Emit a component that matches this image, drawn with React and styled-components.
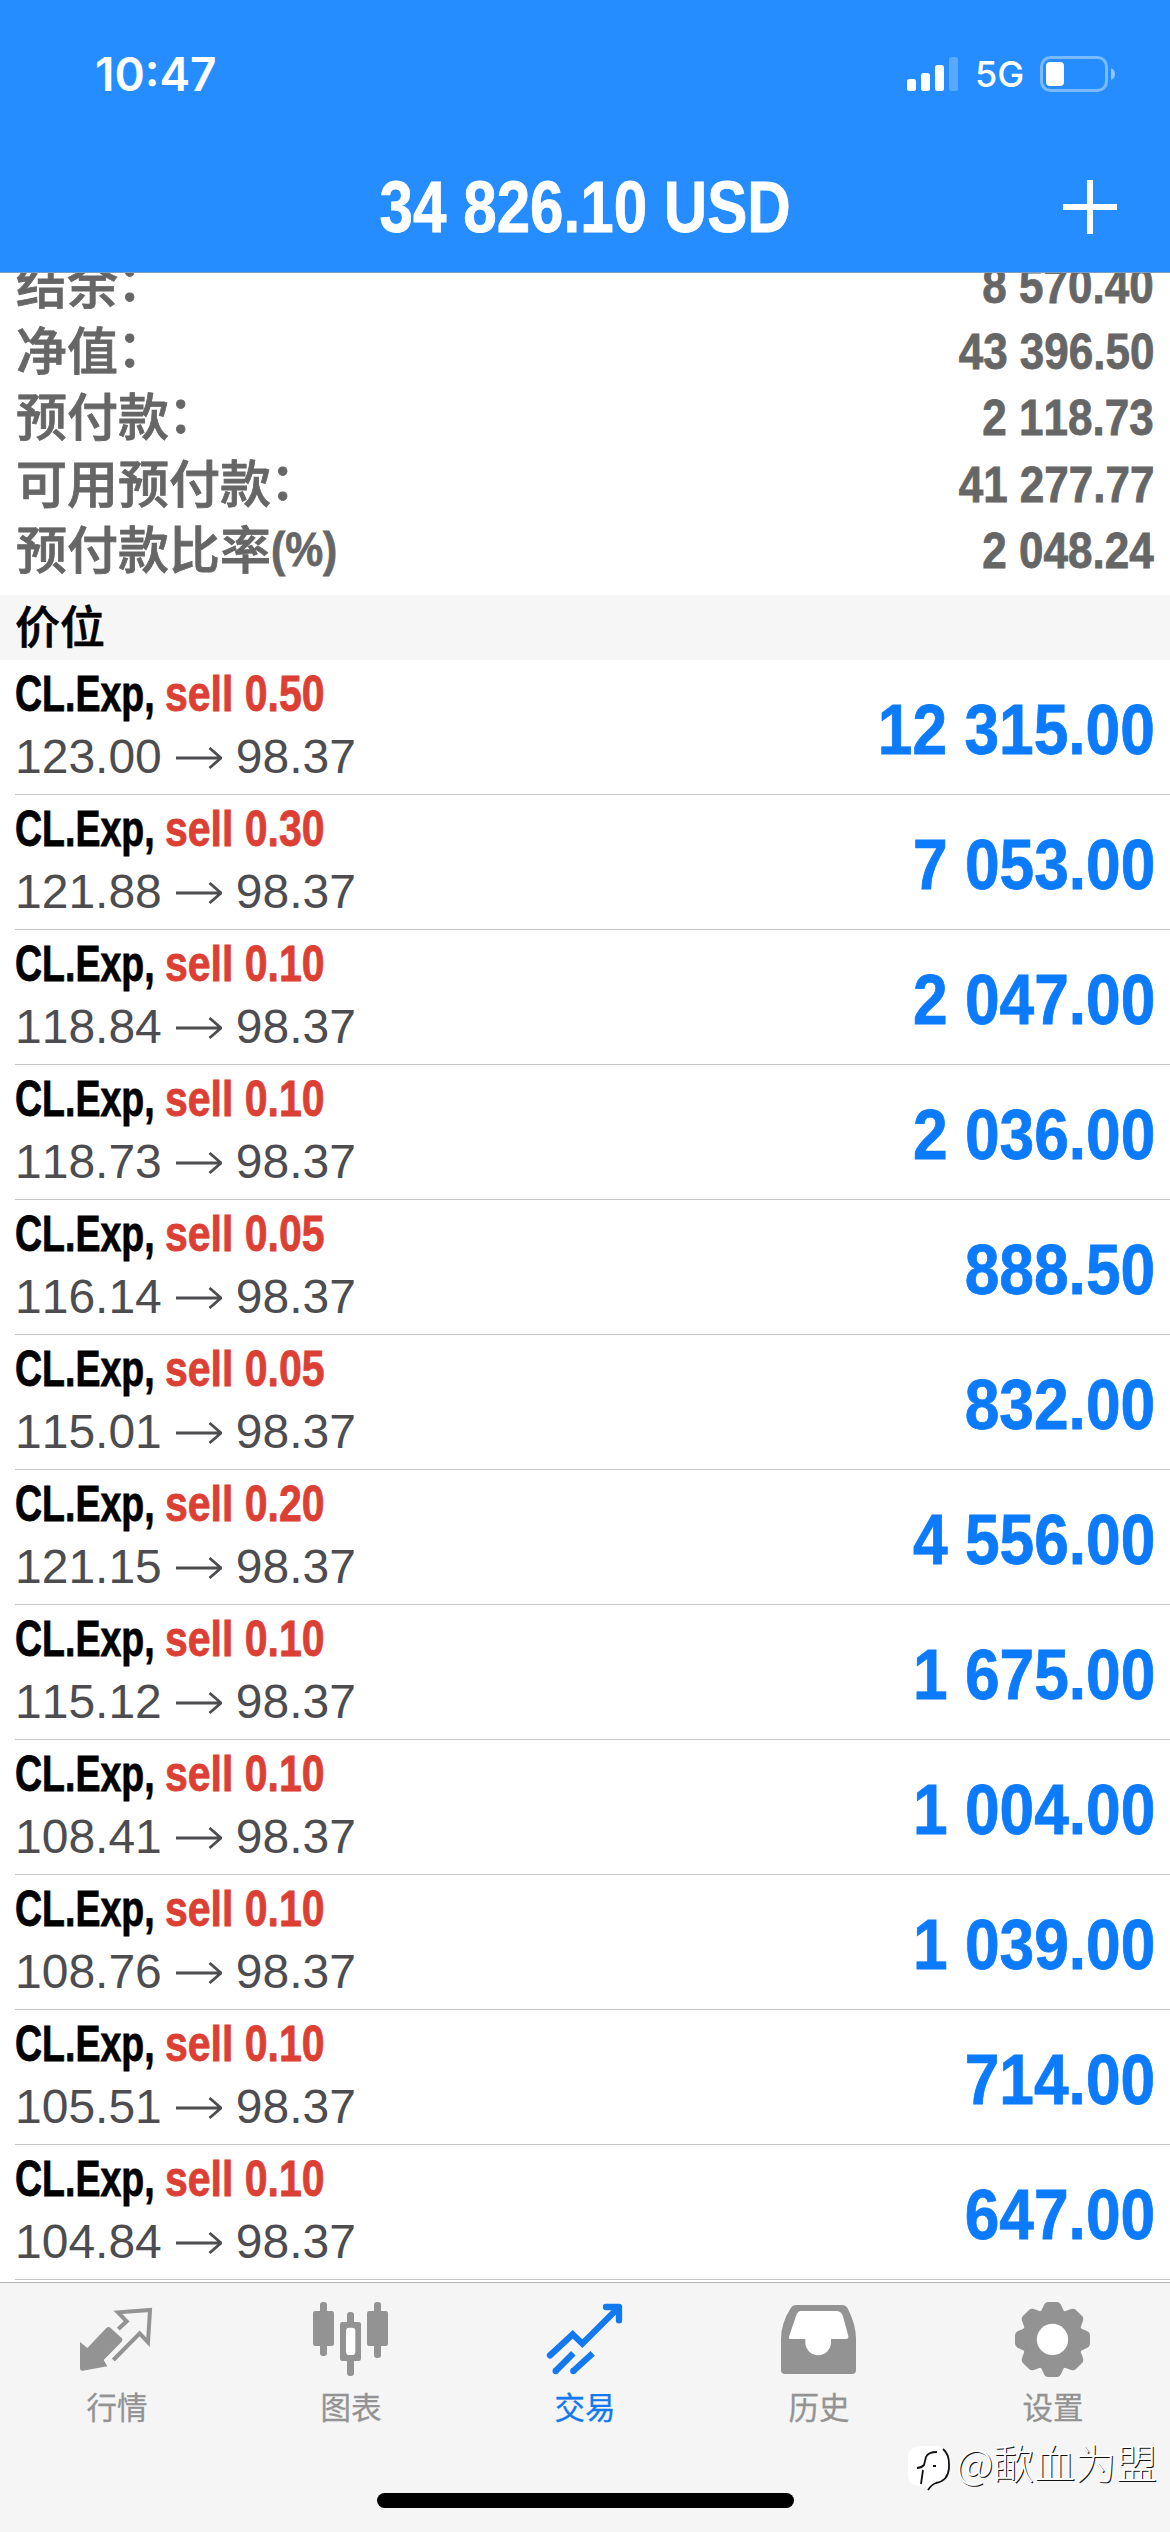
import styled, { createGlobalStyle } from 'styled-components'

const GlobalStyle = createGlobalStyle`
  * {
    box-sizing: border-box;
  }
  body {
    margin: 0;
    background: #fff;
  }
`

const Screen = styled.div`
  display: flex;
  flex-direction: column;
  width: 1170px;
  height: 2532px;
  overflow: hidden;
  background: #fff;
  font-family: 'Liberation Sans', 'Noto Sans CJK SC', sans-serif;
  font-kerning: none;
  white-space: nowrap;
`

const Header = styled.header`
  flex: none;
  height: 273px;
  background: #258dff;
  border-bottom: 1px solid #7c9dbd;
  color: #fff;
`

const StatusBar = styled.div`
  display: flex;
  justify-content: space-between;
  align-items: center;
  height: 148px;
  padding: 0 54px 0 95px;
`

const Time = styled.span`
  font-family: Inter, sans-serif;
  font-weight: 600;
  font-size: 46px;
  line-height: 56px;
`

const StatusIcons = styled.div`
  display: flex;
  align-items: center;
`

const Network = styled.span`
  width: 65px;
  margin-left: 16px;
  font-family: Inter, sans-serif;
  font-weight: 500;
  font-size: 36px;
  line-height: 44px;
`

const NavBar = styled.div`
  display: grid;
  grid-template-columns: 1fr 420px 1fr;
  align-items: center;
  height: 118px;
  padding-right: 52px;
  padding-left: 52px;
`

// condensed bold face, squeezed from the regular width
const Condensed = styled.span`
  display: block;
  font-weight: 700;
  -webkit-text-stroke: 0.8px currentColor;
  transform: scaleX(${(p) => p.$squeeze});
  transform-origin: ${(p) => p.$origin || 'left'} center;
`

const Title = styled(Condensed)`
  justify-self: center;
  font-size: 72px;
  line-height: 116px;
`

const AddButton = styled.button`
  justify-self: end;
  display: flex;
  padding: 0;
  border: 0;
  background: none;
`

const Content = styled.main`
  flex: none;
  height: 2007px;
  overflow: hidden;
`

const Summary = styled.section`
  margin-top: -24px;
  height: 346px;
  padding: 0 16px;
  color: #666;
`

const SummaryRow = styled.div`
  display: flex;
  justify-content: space-between;
  height: 66.2px;
`

const SummaryLabel = styled.span`
  display: flex;
  font-family: 'Noto Sans CJK SC', sans-serif;
  font-weight: 500;
  font-size: 51px;
  line-height: 66px;
  -webkit-text-stroke: 0.8px currentColor;
`

const Colon = styled.span`
  transform: translate(-1px, -3px);
`

const Unit = styled(Condensed)`
  font-family: 'Liberation Sans', sans-serif;
  font-size: 49px;
  line-height: 70px;
`

const SummaryValue = styled(Condensed)`
  padding-top: 4px;
  font-size: 50px;
  line-height: 66px;
`

const SectionTitle = styled.h2`
  height: 65px;
  margin: 0;
  padding-left: 15px;
  background: #f6f6f6;
  color: #000;
  font-family: 'Noto Sans CJK SC', sans-serif;
  font-weight: 500;
  font-size: 45px;
  line-height: 60px;
  -webkit-text-stroke: 0.6px currentColor;
`

const Position = styled.div`
  display: flex;
  justify-content: space-between;
  height: 135px;
  margin-left: 15px;
  padding-right: 15px;
  border-bottom: 1px solid #c4c4c6;
`

const Deal = styled.div`
  display: flex;
  height: 68px;
  font-size: 50px;
  line-height: 69px;
`

const Symbol = styled(Condensed)`
  width: 150px;
  color: #000;
`

const Side = styled(Condensed)`
  color: #dc4034;
`

const Prices = styled.div`
  display: flex;
  align-items: center;
  height: 58px;
  color: #4d4d50;
  font-size: 48px;
  line-height: 58px;
`

const Arrow = styled.svg`
  flex: none;
  margin: 2px 14px 0 14px;
`

const Profit = styled(Condensed)`
  color: #0c7bfb;
  font-size: 71px;
  line-height: 139px;
`

const TabBar = styled.nav`
  flex: none;
  display: grid;
  grid-template-columns: repeat(5, 1fr);
  height: 250px;
  border-top: 1px solid #b4b4b4;
  background: #f5f5f5;
  margin-top: 2px;
`

const Tab = styled.a`
  display: flex;
  flex-direction: column;
  align-items: center;
  padding-top: 17px;
  color: ${(p) => (p.$active ? '#1379ee' : '#939393')};
  font-family: 'Noto Sans CJK SC', sans-serif;
  font-size: 30.5px;
  line-height: 44px;
  -webkit-text-stroke: 0.3px currentColor;
`

const TabIcon = styled.svg`
  width: 80px;
  height: 80px;
  margin-bottom: 4px;
`

const HomeIndicator = styled.div`
  position: absolute;
  top: 2493px;
  left: 377px;
  width: 417px;
  height: 15px;
  border-radius: 8px;
  background: #000;
`

const Watermark = styled.div`
  position: absolute;
  top: 2432px;
  left: 907px;
  display: flex;
  align-items: center;
  height: 60px;
  color: #fff;
  font-family: 'Noto Sans CJK SC', sans-serif;
  font-weight: 300;
  font-size: 41px;
  line-height: 58px;
  text-shadow: 1px 1px 0 #111;
`

const WatermarkName = styled.span`
  height: 60px;
  margin-left: 3px;
`

const WatermarkLogo = styled.svg`
  margin-top: 14px;
`

const summary = [
  { label: '结余', value: '8 570.40' },
  { label: '净值', value: '43 396.50' },
  { label: '预付款', value: '2 118.73' },
  { label: '可用预付款', value: '41 277.77' },
  { label: '预付款比率', unit: '(%)', value: '2 048.24' },
]

const positions = [
  { volume: '0.50', open: '123.00', profit: '12 315.00' },
  { volume: '0.30', open: '121.88', profit: '7 053.00' },
  { volume: '0.10', open: '118.84', profit: '2 047.00' },
  { volume: '0.10', open: '118.73', profit: '2 036.00' },
  { volume: '0.05', open: '116.14', profit: '888.50' },
  { volume: '0.05', open: '115.01', profit: '832.00' },
  { volume: '0.20', open: '121.15', profit: '4 556.00' },
  { volume: '0.10', open: '115.12', profit: '1 675.00' },
  { volume: '0.10', open: '108.41', profit: '1 004.00' },
  { volume: '0.10', open: '108.76', profit: '1 039.00' },
  { volume: '0.10', open: '105.51', profit: '714.00' },
  { volume: '0.10', open: '104.84', profit: '647.00' },
]

function QuotesIcon() {
  return (
    <TabIcon viewBox="0 0 240 240">
      <path
        d="M9 126L31 144L88 84Q94 78 100 83L134 114Q139 119 134 125L80 180L91 199L17 212Q9 213 9 205Z"
        fill="currentColor"
      />
      <path
        d="M124 87L149 64L123 37L219 30L213 127L188 100L109 180"
        fill="none"
        stroke="currentColor"
        strokeWidth="12"
      />
    </TabIcon>
  )
}

function ChartIcon() {
  return (
    <TabIcon viewBox="0 0 240 240" fill="currentColor">
      <rect x="27" y="6" width="21" height="162" rx="9" />
      <rect x="6" y="33" width="63" height="105" rx="7" />
      <rect x="108" y="36" width="21" height="192" rx="9" />
      <rect x="87" y="66" width="63" height="117" rx="7" />
      <rect x="105" y="83" width="28" height="82" rx="10" fill="#fff" />
      <rect x="189" y="6" width="21" height="168" rx="9" />
      <rect x="168" y="33" width="63" height="105" rx="7" />
    </TabIcon>
  )
}

function TradeIcon() {
  return (
    <TabIcon viewBox="0 0 240 240" fill="none" stroke="currentColor" strokeWidth="19">
      <path d="M15 166L83 103L112 131L220 23" strokeLinecap="round" />
      <path d="M183 21H222V61" strokeLinecap="round" strokeLinejoin="round" />
      <path d="M32 213L85 160M85 213L143 160" />
      <path d="M32 213h.1M85 213h.1" strokeLinecap="round" />
    </TabIcon>
  )
}

function HistoryIcon() {
  return (
    <TabIcon viewBox="0 0 240 240">
      <path
        d="M52 15H189Q201 15 207 27Q231 75 231 117V210Q231 222 219 222H18Q6 222 6 210V117Q6 70 35 25Q41 15 52 15Z"
        fill="currentColor"
      />
      <path
        d="M66 33H172Q185 33 191 46L208 108Q210 117 200 117H156V127A38.5 38.5 0 0 1 79 127V117H37Q28 117 30 110L52 45Q56 33 66 33Z"
        fill="#fff"
      />
    </TabIcon>
  )
}

function SettingsIcon() {
  return (
    <TabIcon viewBox="0 0 240 240" fill="currentColor">
      <g transform="translate(118.5 118.5)">
        <circle r="90" />
        {[0, 45, 90, 135, 180, 225, 270, 315].map((a) => (
          <path
            key={a}
            transform={`rotate(${a})`}
            d="M-40 -79Q-32 -86 -28 -98Q-23 -112.5 -13 -112.5H13Q23 -112.5 28 -98Q32 -86 40 -79Z"
          />
        ))}
        <circle r="47" fill="#fff" />
      </g>
    </TabIcon>
  )
}

const tabs = [
  { name: '行情', Icon: QuotesIcon },
  { name: '图表', Icon: ChartIcon },
  { name: '交易', Icon: TradeIcon, active: true },
  { name: '历史', Icon: HistoryIcon },
  { name: '设置', Icon: SettingsIcon },
]

export default function App() {
  return (
    <Screen>
      <GlobalStyle />
      <Header>
        <StatusBar>
          <Time>10:47</Time>
          <StatusIcons>
            <svg width="52" height="34" fill="#fff">
              <rect x="0" y="22" width="9" height="12" rx="2.5" />
              <rect x="14" y="16" width="9" height="18" rx="2.5" />
              <rect x="28" y="8" width="9" height="26" rx="2.5" />
              <rect x="42" y="0" width="9" height="34" rx="2.5" opacity=".25" />
            </svg>
            <Network>5G</Network>
            <svg width="76" height="36" fill="#fff">
              <rect x="1.5" y="1.5" width="65" height="33" rx="9" fill="none" stroke="#fff" strokeWidth="3" opacity=".4" />
              <rect x="6" y="6" width="18" height="24" rx="4" />
              <path d="M71 12Q75 14 75 18Q75 22 71 24Z" opacity=".5" />
            </svg>
          </StatusIcons>
        </StatusBar>
        <NavBar>
          <span />
          <Title $squeeze={0.835} $origin="center">34 826.10 USD</Title>
          <AddButton>
            <svg width="56" height="56" stroke="#fff" strokeWidth="6">
              <path d="M1 28H55M28 1V55" />
            </svg>
          </AddButton>
        </NavBar>
      </Header>
      <Content>
        <Summary>
          {summary.map(({ label, unit, value }) => (
            <SummaryRow key={label}>
              <SummaryLabel>
                {label}
                {unit ? <Unit $squeeze={0.87}>{unit}</Unit> : <Colon>：</Colon>}
              </SummaryLabel>
              <SummaryValue $squeeze={0.88} $origin="right">{value}</SummaryValue>
            </SummaryRow>
          ))}
        </Summary>
        <SectionTitle>价位</SectionTitle>
        {positions.map(({ volume, open, profit }) => (
          <Position key={open}>
            <div>
              <Deal>
                <Symbol $squeeze={0.75}>CL.Exp,</Symbol>
                <Side $squeeze={0.82}>sell {volume}</Side>
              </Deal>
              <Prices>
                {open}
                <Arrow width="46" height="22" fill="none" stroke="currentColor" strokeWidth="2.8">
                  <path d="M0 11H45M33.5 1L45 11L33.5 21" />
                </Arrow>
                98.37
              </Prices>
            </div>
            <Profit $squeeze={0.877} $origin="right">{profit}</Profit>
          </Position>
        ))}
      </Content>
      <TabBar>
        {tabs.map(({ name, Icon, active }) => (
          <Tab key={name} $active={active}>
            <Icon />
            {name}
          </Tab>
        ))}
      </TabBar>
      <HomeIndicator />
      <Watermark>
        <WatermarkLogo width="46" height="50" viewBox="0 0 46 50">
          <path d="M12 2H31Q42 4 42 20V26Q41 38 30 39L21 46L20 42H12Q1 41 1 30V14Q1 3 12 2Z" fill="#fff" />
          <path d="M36 5Q42 10 42 20V24Q41 37 29 39Q24 41 21 46" fill="none" stroke="#111" strokeWidth="1.8" />
          <path d="M30 8Q21 8 19 13L17 21Q14 24 10 24M16 26L14 40M26 22H29" fill="none" stroke="#111" strokeWidth="1.8" />
        </WatermarkLogo>
        <WatermarkName>@歃血为盟</WatermarkName>
      </Watermark>
    </Screen>
  )
}
